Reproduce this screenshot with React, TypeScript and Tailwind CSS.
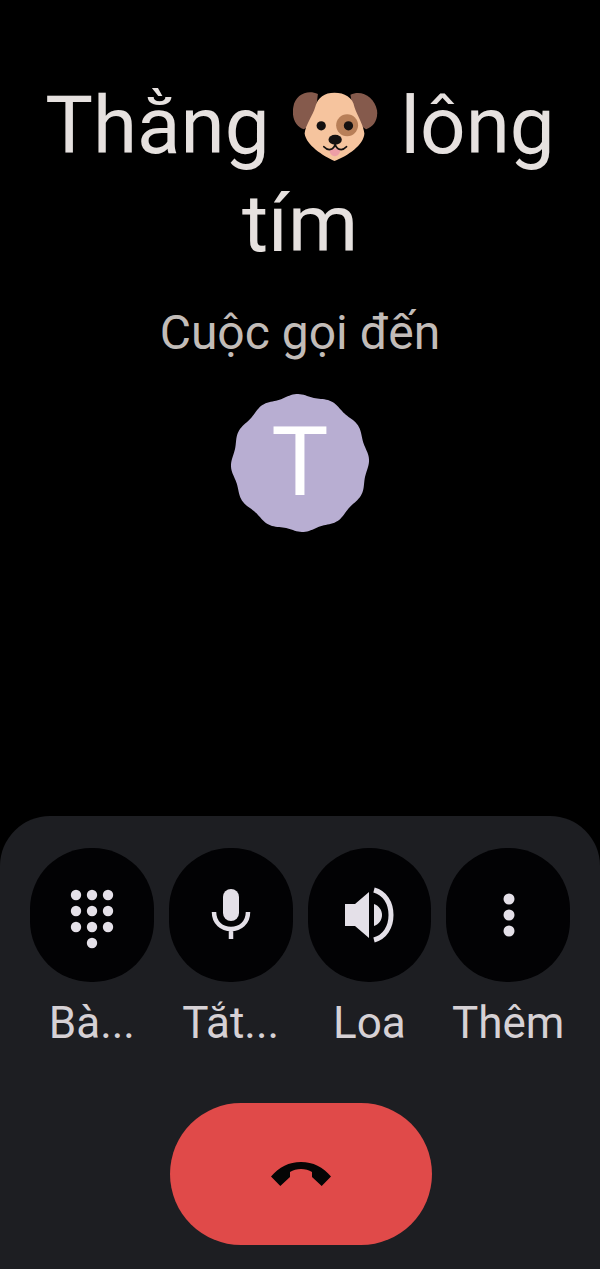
const wavyPath = (() => {
  const pts: string[] = [];
  for (let i = 0; i < 240; i++) {
    const a = (i / 240) * Math.PI * 2;
    const r = 67.8 + 1.3 * Math.cos(a * 12 + 0.6);
    pts.push(`${(70 + r * Math.cos(a)).toFixed(2)} ${(70 + r * Math.sin(a)).toFixed(2)}`);
  }
  return `M${pts.join("L")}Z`;
})();

function DogEmoji() {
  return (
    <svg viewBox="25 28 256 212" className="mx-[23px] inline-block h-[71px] w-[85px] align-[-9px]">
      <path d="M100 36C68 22 32 38 26 75C20 108 34 136 58 142C82 130 94 95 100 36Z" fill="#855a4c" />
      <path d="M198 38C232 22 270 45 278 85C282 116 266 136 245 142C222 130 206 95 198 38Z" fill="#855a4c" />
      <path d="M150 32C120 32 100 45 92 75C85 100 62 130 60 155C65 190 115 222 150 238C190 222 238 190 240 155C238 130 218 100 210 75C205 45 180 32 150 32Z" fill="#f6c49e" />
      <circle cx="188" cy="130" r="33" fill="#b87f58" />
      <circle cx="110" cy="132" r="14" fill="#141010" />
      <circle cx="192" cy="132" r="14" fill="#141010" />
      <path d="M135 204C135 230 167 230 167 204C156 199 146 199 135 204Z" fill="#ee9ea6" />
      <path d="M118 195C130 208 146 206 152 188C158 206 174 208 186 195" fill="none" stroke="#141010" strokeWidth="5.5" strokeLinecap="round" />
      <ellipse cx="152" cy="174" rx="20" ry="15" fill="#141010" />
    </svg>
  );
}

function DialpadIcon() {
  const rows = [16, 32, 48];
  const cols = [16, 32, 48];
  return (
    <svg viewBox="0 0 64 72" className="h-[72px] w-[64px]" fill="#e4e0e8">
      {rows.map((y) => cols.map((x) => <circle key={`${x}-${y}`} cx={x} cy={y} r="5.2" />))}
      <circle cx="32" cy="64" r="5.2" />
    </svg>
  );
}

function MicIcon() {
  return (
    <svg viewBox="0 0 64 72" className="h-[72px] w-[64px]">
      <rect x="24" y="10" width="16" height="32" rx="8" fill="#e4e0e8" />
      <path d="M15 33C15 44 23 50 32 50C41 50 49 44 49 33M32 50V60" fill="none" stroke="#e4e0e8" strokeWidth="4.5" />
    </svg>
  );
}

function SpeakerIcon() {
  return (
    <svg viewBox="0 0 64 72" className="h-[72px] w-[64px]">
      <path d="M8 25H18L32 13V59L18 47H8Z" fill="#e4e0e8" />
      <path d="M37 25C42 27 45 31 45 36C45 41 42 45 37 47Z" fill="#e4e0e8" />
      <path d="M37 11C48 14 54 24 54 36C54 48 48 58 37 61" fill="none" stroke="#e4e0e8" strokeWidth="5" />
    </svg>
  );
}

function MoreIcon() {
  return (
    <svg viewBox="0 0 64 72" className="h-[72px] w-[64px]" fill="#e4e0e8">
      <circle cx="33" cy="20" r="5.5" />
      <circle cx="33" cy="36" r="5.5" />
      <circle cx="33" cy="52" r="5.5" />
    </svg>
  );
}

const actions = [
  { label: "Bà...", icon: <DialpadIcon /> },
  { label: "Tắt...", icon: <MicIcon /> },
  { label: "Loa", icon: <SpeakerIcon /> },
  { label: "Thêm", icon: <MoreIcon /> },
];

export default function App() {
  return (
    <div className="flex h-[1269px] w-[600px] flex-col overflow-hidden bg-black font-['Roboto',sans-serif]">
      {/* Caller info */}
      <div className="flex flex-1 flex-col items-center pt-[77px]">
        <h1 className="w-full text-center text-[80px] leading-[98px] font-normal text-[#e6e1df]">
          <span className="whitespace-nowrap">
            Thằng
            <DogEmoji />
            lông
          </span>
          <br />
          tím
        </h1>
        <p className="mt-[33px] text-[48px] leading-[54px] text-[#c2bcb8]">Cuộc gọi đến</p>
        <div className="relative mt-[33px] h-[140px] w-[140px]">
          <svg viewBox="0 0 140 140" className="h-[140px] w-[140px]">
            <path d={wavyPath} fill="#b8aed2" />
          </svg>
          <span className="absolute inset-0 flex items-center justify-center pb-[3px] text-[96px] leading-none font-normal text-white">T</span>
        </div>
      </div>

      {/* Bottom panel */}
      <div className="flex h-[453px] flex-col items-center rounded-t-[50px] bg-[#1d1e22] px-[30px] pt-[32px]">
        <div className="grid w-full grid-cols-4 gap-x-[15px]">
          {actions.map((a) => (
            <div key={a.label} className="flex flex-col items-center">
              <div className="flex h-[134px] w-full items-center justify-center rounded-[61px] bg-[#020204]">{a.icon}</div>
              <span className="mt-[15px] text-[44px] leading-[52px] whitespace-nowrap text-[#d6d1d5]">{a.label}</span>
            </div>
          ))}
        </div>
        <div className="mt-[54px] ml-[2px] flex h-[142px] w-[262px] items-center justify-center rounded-full bg-[#e04a49]">
          <svg viewBox="0 0 60 24" className="h-[24px] w-[60px]" fill="#050505">
            <path d="M0 14.5C8 5 18 0 30 0C42 0 52 5 60 14.5L50.7 24L41 15V10C38 8 34 7 30 7C26 7 22 8 19 10V15L9.3 24Z" />
          </svg>
        </div>
      </div>
    </div>
  );
}
